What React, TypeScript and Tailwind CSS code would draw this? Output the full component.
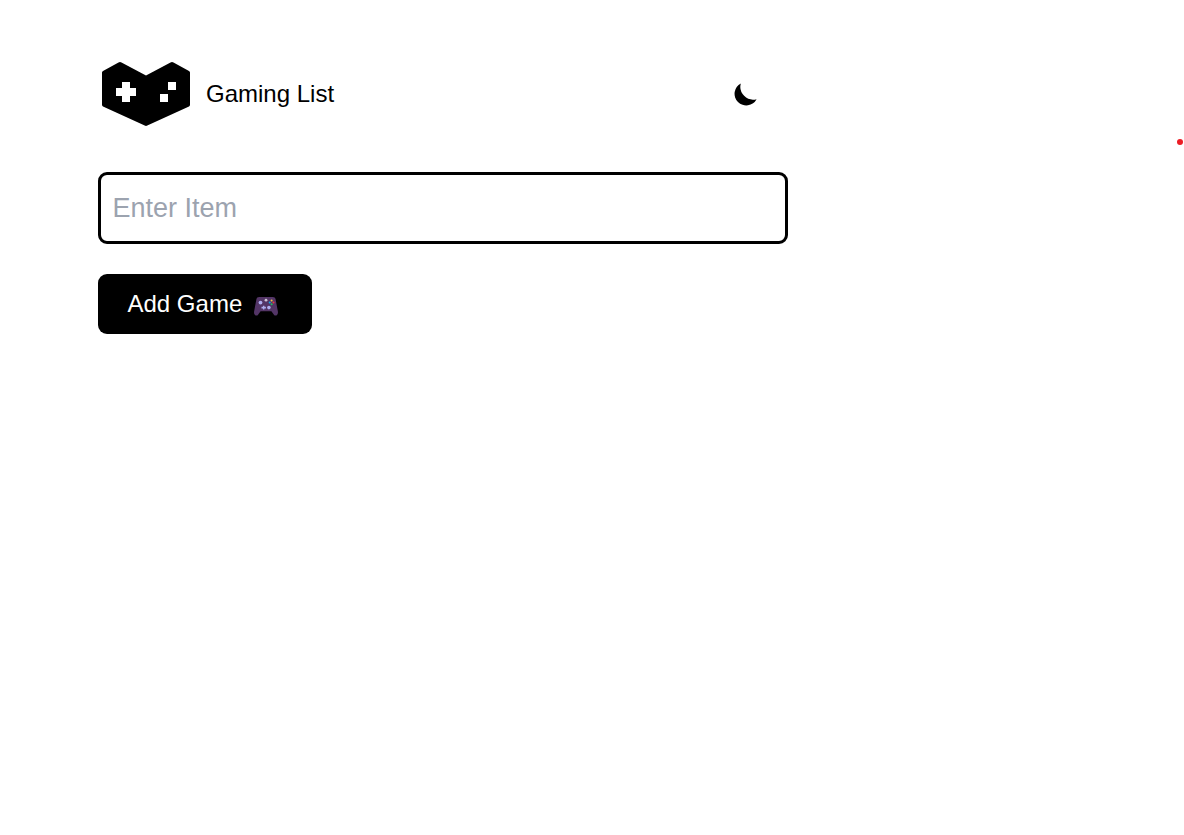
import { useState } from "react";

function Logo() {
  return (
    <svg className="h-[66px] w-[90px] shrink-0" viewBox="0 0 90 66" aria-hidden="true">
      <path
        d="M17.5 1.5Q19 .6 20.5 1.5L45 14.6L69.5 1.5Q71 .6 72.5 1.5L88 10Q89 10.6 89 11.6V43.8Q89 45 88 45.5L46.3 64.6Q45 65.2 43.7 64.6L2 45.5Q1 45 1 43.8V11.6Q1 10.6 2 10Z"
        fill="#000"
      />
      <path
        d="M21 21h8v6h6v8h-6v6h-8v-6h-6v-8h6zM67 21h8v8h-8zM59 33h8v8h-8z"
        fill="#fff"
      />
    </svg>
  );
}

function Moon() {
  return (
    <svg className="size-6" viewBox="0 0 24 24" aria-hidden="true">
      <path
        d="M7.8 .4A11.7 11.7 0 1 0 23.6 16.2A12.9 12.9 0 0 1 7.8 .4Z"
        fill="#000"
      />
    </svg>
  );
}

function Controller() {
  return (
    <svg className="h-[19px] w-6" viewBox="0 0 24 19" aria-hidden="true">
      <path
        d="M5.2 0H18.8C20.4 0 21.2 .8 21.6 2.2L23.9 14.6C24.4 18 21.9 19.3 20.3 18.2L17.4 14.2H6.6L3.7 18.2C2.1 19.3-.4 18 .1 14.6L2.4 2.2C2.8 .8 3.6 0 5.2 0Z"
        fill="#533566"
      />
      <circle cx="6.5" cy="5.6" r="1.9" fill="#aeaeef" />
      <circle cx="14.9" cy="10.6" r="1.8" fill="#aeaeef" />
      <circle cx="12" cy="3.2" r="1.4" fill="#cdc4d6" />
      <path d="M7.5 9.8h1.5V8.7h1.4v1.1h1.5v1.6h-1.5v1.1H9v-1.1H7.5z" fill="#aeaeef" />
      <circle cx="17.6" cy="3.5" r="1" fill="#f0c84b" />
      <circle cx="15.7" cy="5.4" r="1" fill="#17a6e8" />
      <circle cx="19.5" cy="5.4" r="1" fill="#f1363f" />
      <circle cx="17.6" cy="7.3" r="1" fill="#20c060" />
    </svg>
  );
}

export default function App() {
  const [item, setItem] = useState("");

  return (
    <div className="flex min-h-screen items-start justify-between bg-white font-['Liberation_Sans',Arial,sans-serif] text-black">
      <main className="ml-[98px] flex w-[690px] flex-col items-start pt-[61px]">
        <header className="flex h-[66px] w-full items-center justify-between pr-[31px] pl-[3px]">
          <div className="flex items-center gap-[15px]">
            <Logo />
            <h1 className="text-2xl leading-9">Gaming List</h1>
          </div>
          <button type="button" aria-label="Toggle theme" className="pt-0.5">
            <Moon />
          </button>
        </header>
        <input
          className="mt-[45px] h-[72px] w-full rounded-[9px] border-[3px] border-black px-3 pl-[11.5px] text-[27px] outline-none placeholder:text-[#9ca3af]"
          placeholder="Enter Item"
          value={item}
          onChange={(e) => setItem(e.target.value)}
        />
        <button
          type="button"
          className="mt-[30px] flex h-[60px] w-[214px] items-center rounded-[9px] bg-black pl-[29.5px] text-2xl text-white"
        >
          <span>Add Game</span>
          <span className="ml-[11.6px] pt-1">
            <Controller />
          </span>
        </button>
      </main>
      <span className="mt-[139px] mr-[1px] size-1.5 rounded-full bg-[#ec1c24]" />
    </div>
  );
}
